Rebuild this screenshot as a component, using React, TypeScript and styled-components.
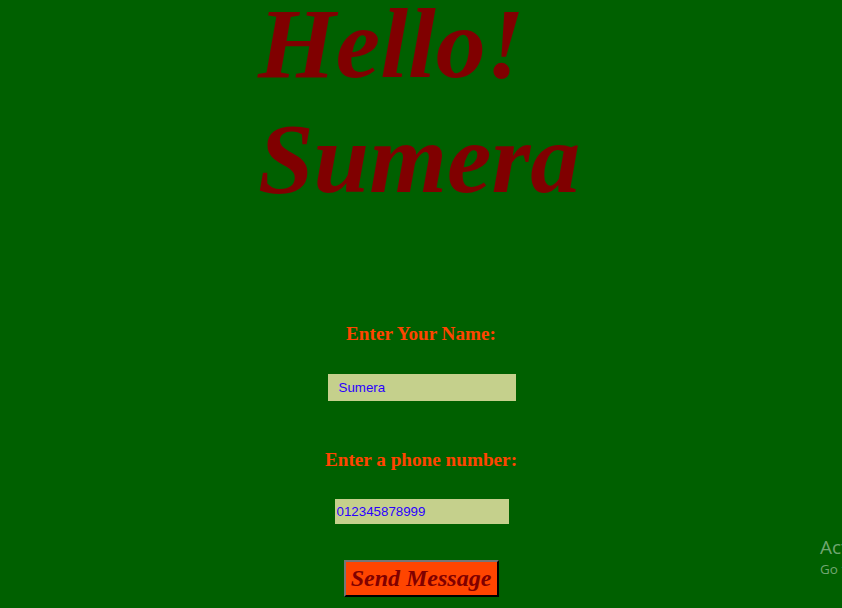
import React from "react";
import styled, { createGlobalStyle } from "styled-components";

const GlobalStyle = createGlobalStyle`
    html, body {
        margin: 0;
        padding: 0;
        overflow: hidden;
        background-color: #006000;
    }
    body {
        font-family: "Liberation Serif", "Times New Roman", serif;
        min-height: 608px;
        position: relative;
    }
`;

const Page = styled.div`
    display: flex;
    flex-direction: column;
    width: 842px;
    height: 608px;
`;

const Greeting = styled.h1`
    margin: -14px 0 0 258px;
    font-size: 100px;
    font-style: italic;
    font-weight: bold;
    line-height: 115px;
    color: #800000;
`;

const Form = styled.form`
    display: flex;
    flex-direction: column;
    align-items: center;
    margin-top: 107px;
`;

const Label = styled.label<{ $gap: number }>`
    display: block;
    margin-top: ${({ $gap }) => $gap}px;
    font-size: 19.2px;
    font-weight: bold;
    line-height: 21.5px;
    color: #ff4500;
`;

const TextInput = styled.input<{ $width: number; $height: number; $padLeft: number }>`
    box-sizing: border-box;
    width: ${({ $width }) => $width}px;
    height: ${({ $height }) => $height}px;
    margin: 29px 0 0 1px;
    padding: 0 0 0 ${({ $padLeft }) => $padLeft}px;
    border: none;
    outline: none;
    background-color: #c5d08c;
    color: #2a00ff;
    font-family: "Liberation Sans", Arial, sans-serif;
    font-size: 13.33px;
`;

const SendButton = styled.button`
    box-sizing: border-box;
    width: 155px;
    height: 37px;
    margin-top: 36px;
    padding: 0;
    border: 2px outset #767676;
    border-right-color: #333;
    border-bottom-color: #333;
    background-color: #ff4500;
    color: #800000;
    font-family: "Liberation Serif", "Times New Roman", serif;
    font-size: 24px;
    font-style: italic;
    font-weight: bold;
    cursor: pointer;
`;

const Watermark = styled.div`
    position: absolute;
    left: 820px;
    top: 535px;
    white-space: nowrap;
    font-family: "Open Sans", "Noto Sans", sans-serif;
    color: rgba(255, 255, 255, 0.45);
`;

const WatermarkTitle = styled.div`
    font-size: 19px;
    line-height: 25px;
`;

const WatermarkHint = styled.div`
    font-size: 13.5px;
    line-height: 18px;
`;

const App: React.FC = () => {
    return (
        <>
            <GlobalStyle />
            <Page>
                <Greeting>
                    Hello!
                    <br />
                    Sumera
                </Greeting>

                <Form onSubmit={(e) => e.preventDefault()}>
                    <Label $gap={0} htmlFor="name">Enter Your Name:</Label>
                    <TextInput id="name" type="text" defaultValue="Sumera" $width={188} $height={27} $padLeft={11} />

                    <Label $gap={48} htmlFor="phone">Enter a phone number:</Label>
                    <TextInput id="phone" type="tel" defaultValue="012345878999" $width={174} $height={25} $padLeft={2} />

                    <SendButton type="submit">Send Message</SendButton>
                </Form>
            </Page>

            <Watermark>
                <WatermarkTitle>Activate Windows</WatermarkTitle>
                <WatermarkHint>Go to Settings to activate Windows.</WatermarkHint>
            </Watermark>
        </>
    );
};

export default App;
